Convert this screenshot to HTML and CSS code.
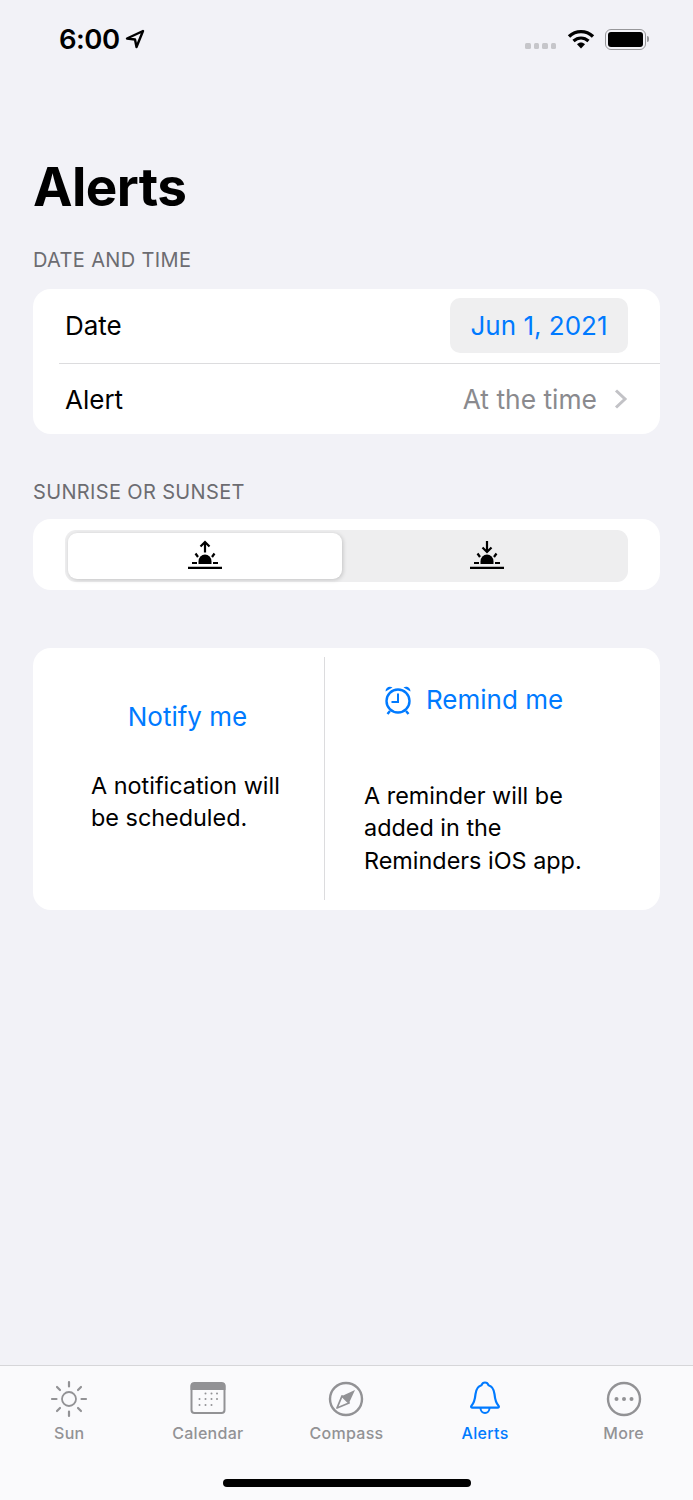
FILE: index.html
```html
<!DOCTYPE html>
<html>
<head lang="en">
    <meta charset="UTF-8">
    <title>Alerts</title>
    <link rel="stylesheet" href="styles.css">
</head>
<body>
<div class="phone">
    <div class="status">
        <div class="clock">6:00
            <svg class="arrow" width="20" height="20" viewBox="0 0 20 20"><path d="M18 2 2 9.500 10 10.500 11.500 18Z" fill="none" stroke="#000" stroke-width="2.400" stroke-linejoin="round"/></svg>
        </div>
        <div class="status-right">
            <div class="signal"><i></i><i></i><i></i><i></i></div>
            <svg class="wifi" width="28" height="22" viewBox="0 0 28 22"><path d="M2 8.500C9 2 19 2 26 8.500" fill="none" stroke="#000" stroke-width="3.400"/><path d="M6.500 13C11 9 17 9 21.500 13" fill="none" stroke="#000" stroke-width="3.200"/><path d="M10 16.200C12.500 14 15.500 14 18 16.200L14 20.500Z" fill="#000"/></svg>
            <div class="battery"><div class="battery-fill"></div></div>
            <div class="battery-tip"></div>
        </div>
    </div>

    <div class="title">Alerts</div>

    <div class="section-label">DATE AND TIME</div>
    <div class="card">
        <div class="row row-date">
            <span>Date</span>
            <span class="date-pill">Jun 1, 2021</span>
        </div>
        <div class="row row-alert">
            <span>Alert</span>
            <span class="alert-value">At the time
                <svg class="chevron" width="14" height="22" viewBox="0 0 14 22"><path d="M2 2.500 11 11 2 19.500" fill="none" stroke="#c2c2c6" stroke-width="3"/></svg>
            </span>
        </div>
    </div>

    <div class="section-label label-sun">SUNRISE OR SUNSET</div>
    <div class="card card-seg">
        <div class="segment">
            <div class="seg seg-on">
                <svg width="36" height="30" viewBox="0 0 36 30">
                    <path d="M18 12.500V2M13.500 6.500 18 2 22.500 6.500" fill="none" stroke="#000" stroke-width="2.200"/>
                    <path d="M11.500 21.500a6.500 7 0 0 1 13 0v2.500h-13Z" fill="#000"/>
                    <path d="M5 23h5M26 23h5M8.500 13.500l2.500 3.500M27.500 13.500l-2.500 3.500" stroke="#000" stroke-width="2.200"/>
                    <path d="M1 27.800h34" stroke="#000" stroke-width="2.200"/>
                </svg>
            </div>
            <div class="seg seg-off">
                <svg width="36" height="30" viewBox="0 0 36 30">
                    <path d="M18 1V11.500M13.500 7.500 18 12 22.500 7.500" fill="none" stroke="#000" stroke-width="2.200"/>
                    <path d="M11.500 21.500a6.500 7 0 0 1 13 0v2.500h-13Z" fill="#000"/>
                    <path d="M5 23h5M26 23h5M8.500 13.500l2.500 3.500M27.500 13.500l-2.500 3.500" stroke="#000" stroke-width="2.200"/>
                    <path d="M1 27.800h34" stroke="#000" stroke-width="2.200"/>
                </svg>
            </div>
        </div>
    </div>

    <div class="card card-notify">
        <div class="col col-left">
            <div class="col-action">Notify me</div>
            <div class="col-text">A notification will be scheduled.</div>
        </div>
        <div class="col col-right">
            <div class="col-action">
                <svg width="30" height="32" viewBox="0 0 30 32">
                    <circle cx="15" cy="17" r="11.500" fill="none" stroke="#007aff" stroke-width="2.400"/>
                    <path d="M15 9.500V18H8.500" fill="none" stroke="#007aff" stroke-width="2"/>
                    <path d="M2.500 7.500C2.500 3.500 6.500 1.500 9.500 3.500ZM27.500 7.500C27.500 3.500 23.500 1.500 20.500 3.500Z" fill="#007aff"/>
                    <path d="M7 27 4.500 30M23 27 25.500 30" stroke="#007aff" stroke-width="2.400"/>
                </svg>
                Remind me
            </div>
            <div class="col-text">A reminder will be added in the Reminders iOS app.</div>
        </div>
    </div>

    <div class="spacer"></div>

    <div class="tabbar">
        <div class="tabs">
            <div class="tab">
                <svg width="38" height="38" viewBox="0 0 38 38">
                    <circle cx="19" cy="19" r="7" fill="none" stroke="#929295" stroke-width="1.800"/>
                    <path d="M19 2v4.500M19 31.500v4.500M2 19h4.500M31.500 19h4.500M7 7l3 3M28 28l3 3M7 31l3-3M28 10l3-3" stroke="#929295" stroke-width="2.200" stroke-linecap="round"/>
                </svg>
                <span>Sun</span>
            </div>
            <div class="tab">
                <svg width="38" height="38" viewBox="0 0 38 38">
                    <rect x="2.500" y="3" width="33" height="30" rx="3" fill="none" stroke="#929295" stroke-width="2"/>
                    <path d="M1.500 6a3 3 0 0 1 3-3h29a3 3 0 0 1 3 3v4h-35Z" fill="#929295"/>
                    <g fill="#929295">
                        <circle cx="16.500" cy="13.500" r="1"/><circle cx="22.500" cy="13.500" r="1"/><circle cx="28" cy="13.500" r="1"/>
                        <circle cx="10.500" cy="19" r="1"/><circle cx="16.500" cy="19" r="1"/><circle cx="22.500" cy="19" r="1"/><circle cx="28" cy="19" r="1"/>
                        <circle cx="10.500" cy="25" r="1"/><circle cx="16.500" cy="25" r="1"/><circle cx="22.500" cy="25" r="1"/>
                    </g>
                </svg>
                <span>Calendar</span>
            </div>
            <div class="tab">
                <svg width="38" height="38" viewBox="0 0 38 38">
                    <circle cx="19" cy="19" r="16" fill="none" stroke="#929295" stroke-width="2.400"/>
                    <path d="M28 10 22 23 15 16Z" fill="#929295"/>
                    <path d="M10 28 15 16 22 23Z" fill="none" stroke="#929295" stroke-width="1.800" stroke-linejoin="round"/>
                </svg>
                <span>Compass</span>
            </div>
            <div class="tab tab-on">
                <svg width="38" height="38" viewBox="0 0 38 38">
                    <path d="M19 2.500c2 0 3 1.300 3.500 2.700 4 1 5.500 4.500 6 9 .5 5 1.500 9 4 11.500.8.900.4 2-1 2H6.500c-1.400 0-1.800-1.100-1-2 2.500-2.500 3.500-6.500 4-11.500.5-4.500 2-8 6-9 .5-1.400 1.500-2.700 3.500-2.700Z" fill="none" stroke="#007aff" stroke-width="2.200" stroke-linejoin="round"/>
                    <path d="M14.500 28a4.500 5 0 0 0 9 0" fill="none" stroke="#007aff" stroke-width="2"/>
                </svg>
                <span>Alerts</span>
            </div>
            <div class="tab">
                <svg width="38" height="38" viewBox="0 0 38 38">
                    <circle cx="19" cy="19" r="16" fill="none" stroke="#929295" stroke-width="2.400"/>
                    <circle cx="11.500" cy="19" r="2" fill="#929295"/><circle cx="19" cy="19" r="2" fill="#929295"/><circle cx="26.500" cy="19" r="2" fill="#929295"/>
                </svg>
                <span>More</span>
            </div>
        </div>
        <div class="home-bar"></div>
    </div>
</div>
</body>
</html>
```

FILE: styles.css
```css
*{
    margin: 0;
    padding: 0;
    box-sizing: border-box;
}
body{
    font-family: Inter, "Liberation Sans", sans-serif;
    background-color: #f2f2f7;
    color: #000;
}
.phone{
    display: flex;
    flex-direction: column;
    width: 693px;
    height: 1500px;
    overflow: hidden;
}
.status{
    display: flex;
    justify-content: space-between;
    align-items: center;
    height: 78px;
    padding: 0 44px 0 59px;
}
.clock{
    display: flex;
    align-items: center;
    gap: 6px;
    font-size: 27.500px;
    font-weight: 600;
    letter-spacing: -0.5px;
}
.arrow{
    margin: 0 0 0 -1px;
}
.status-right{
    display: flex;
    align-items: center;
}
.signal{
    display: flex;
    gap: 3px;
    margin: 14px 11px 0 0;
}
.signal i{
    width: 5.500px;
    height: 6px;
    border-radius: 1.500px;
    background-color: #c6c6ca;
}
.wifi{
    margin-right: 10px;
}
.battery{
    width: 41px;
    height: 21px;
    border: 1.500px solid #97979a;
    border-radius: 6px;
    padding: 2px;
}
.battery-fill{
    height: 100%;
    border-radius: 3px;
    background-color: #000;
}
.battery-tip{
    width: 2px;
    height: 6px;
    margin-left: 1px;
    border-radius: 0 2px 2px 0;
    background-color: #97979a;
}
.title{
    margin: 76px 33px 0;
    height: 66px;
    font-size: 53px;
    line-height: 66px;
    font-weight: 700;
    letter-spacing: -0.6px;
}
.section-label{
    margin: 28px 33px 0;
    height: 24px;
    font-size: 20px;
    line-height: 24px;
    letter-spacing: 0.35px;
    color: #6c6c71;
}
.label-sun{
    margin-top: 46px;
}
.card{
    margin: 17px 33px 0;
    border-radius: 18px;
    background-color: #fff;
}
.row{
    display: flex;
    justify-content: space-between;
    align-items: center;
    margin-left: 26px;
    font-size: 26px;
}
.row > span:first-child{
    margin-left: 6px;
}
.row-date{
    height: 75px;
    padding: 0 32px 2px 0;
    border-bottom: 1px solid #dcdcde;
}
.date-pill{
    display: flex;
    align-items: center;
    justify-content: center;
    width: 178px;
    height: 55px;
    border-radius: 10px;
    background-color: #efeff0;
    color: #007aff;
}
.row-alert{
    height: 70px;
    padding-right: 32px;
}
.alert-value{
    display: flex;
    align-items: center;
    gap: 17px;
    font-size: 26.400px;
    color: #8a8a8e;
}
.card-seg{
    display: flex;
    height: 71px;
    margin-top: 15px;
    padding: 11px 32px 8px;
}
.segment{
    display: flex;
    width: 563px;
    height: 52px;
    padding: 3px;
    border-radius: 11px;
    background-color: #eeeeef;
}
.seg{
    display: flex;
    align-items: center;
    justify-content: center;
    flex: 1;
}
.seg svg{
    margin-bottom: 2px;
}
.seg-on{
    flex: 0 0 274px;
    border-radius: 9px;
    background-color: #fff;
    box-shadow: 1px 1px 4px rgba(0,0,0,0.18);
}
.seg-off{
    padding-left: 6px;
}
.card-notify{
    display: flex;
    height: 262px;
    margin-top: 58px;
    padding: 9px 0 10px;
    font-size: 23.400px;
    line-height: 32.400px;
}
.col{
    display: flex;
    flex-direction: column;
    width: 50%;
}
.col-left{
    width: 292px;
    padding: 0 40px 0 58px;
    border-right: 1px solid #dcdcde;
}
.col-right{
    flex: 1;
    padding: 0 60px 0 39px;
}
.col-action{
    display: flex;
    align-items: center;
    gap: 13px;
    font-size: 26px;
    color: #007aff;
}
.col-left .col-action{
    justify-content: center;
    height: 32px;
    margin-top: 44px;
}
.col-left .col-text{
    margin-top: 37px;
}
.col-right .col-action{
    height: 34px;
    margin: 26px 0 0 19px;
}
.col-right .col-text{
    margin-top: 63px;
}
.spacer{
    flex: 1;
}
.tabbar{
    display: flex;
    flex-direction: column;
    height: 135px;
    border-top: 1.500px solid #d6d6d9;
    background-color: #fafafc;
}
.tabs{
    display: flex;
    padding: 14px 0 0;
}
.tab{
    display: flex;
    flex-direction: column;
    align-items: center;
    flex: 1;
    font-size: 16px;
    font-weight: 500;
    line-height: 20px;
    color: #929295;
}
.tab span{
    margin-top: 5px;
    letter-spacing: 0.3px;
}
.tab-on{
    color: #007aff;
}
.home-bar{
    width: 248px;
    height: 8px;
    margin: 36px auto 0;
    border-radius: 4px;
    background-color: #000;
}
```
